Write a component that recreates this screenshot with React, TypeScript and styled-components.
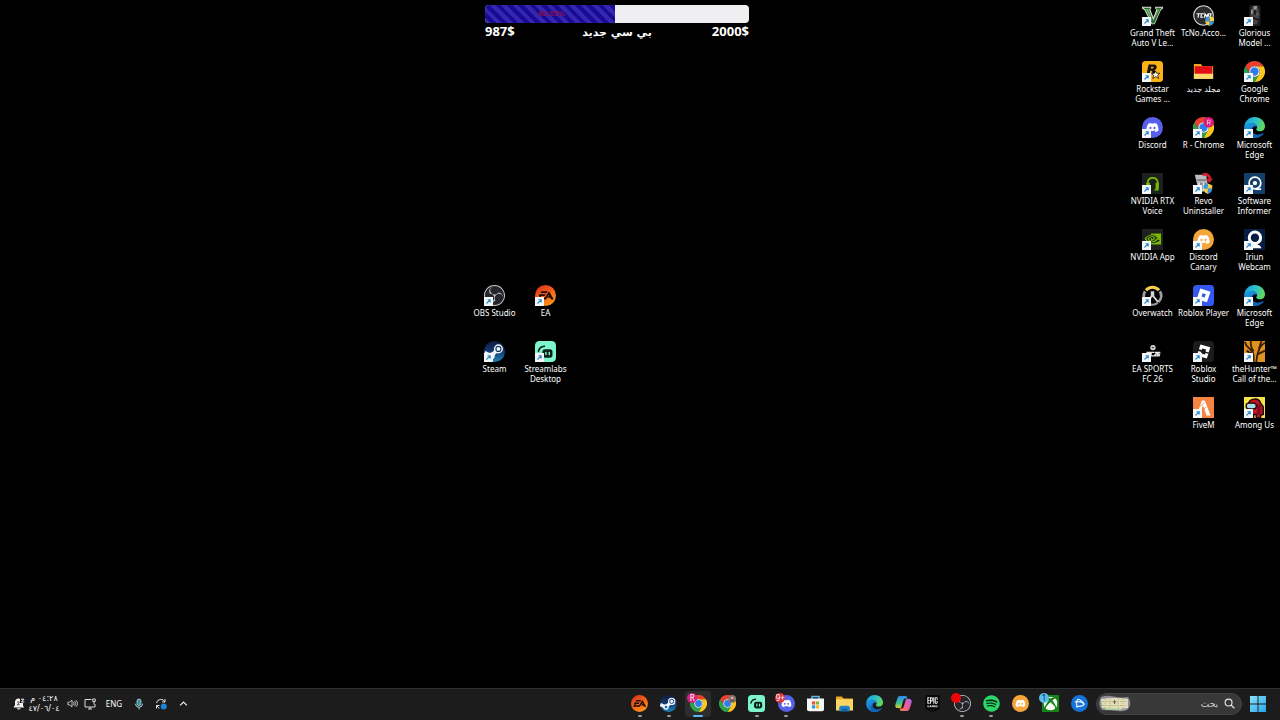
import React from 'react';
import styled, { createGlobalStyle } from 'styled-components';
import { FaDiscord, FaSpotify, FaXbox } from 'react-icons/fa';
import { SiNvidia, SiObsstudio, SiEpicgames } from 'react-icons/si';

const GlobalStyle = createGlobalStyle`
  * { box-sizing: border-box; }
  html { background: #000; }
  body { margin: 0; background: #000; color: #fff; font-family: "Noto Sans", "DejaVu Sans", sans-serif; }
  button, input { font: inherit; color: inherit; }
`;

/* ---------- Icon artwork, every drawing on a 24 unit square ---------- */

type ArtProps = { size: number };

const Art = ({ size, children }: ArtProps & { children: React.ReactNode }) => (
  <svg width={size} height={size} viewBox="0 0 24 24" aria-hidden="true">
    {children}
  </svg>
);

const chromeShape = (
  <>
    <path fill="#e8412f" d="M1.6 6A12 12 0 0 1 22.4 6H12A6 6 0 0 0 6.8 15Z" />
    <path fill="#fcc61c" d="M22.4 6A12 12 0 0 1 12 24L17.2 15A6 6 0 0 0 12 6Z" />
    <path fill="#2ba24c" d="M12 24A12 12 0 0 1 1.6 6L6.8 15A6 6 0 0 0 17.2 15Z" />
    <circle cx="12" cy="12" r="6" fill="#fff" />
    <circle cx="12" cy="12" r="4.8" fill="#2f7bea" />
  </>
);

const Chrome = ({ size }: ArtProps) => <Art size={size}>{chromeShape}</Art>;

const ChromeProfile = ({ size }: ArtProps) => (
  <Art size={size}>
    {chromeShape}
    <circle cx="18" cy="6" r="6" fill="#d81b78" />
    <path d="M16.5 9V3.5H18.6a1.4 1.4 0 0 1 0 2.9H16.5M18.3 6.4L19.8 9" fill="none" stroke="#fbd" strokeWidth="1" />
  </Art>
);

const ChromeGuest = ({ size }: ArtProps) => (
  <Art size={size}>
    {chromeShape}
    <circle cx="18.5" cy="5.5" r="5.5" fill="#8a7468" />
    <circle cx="18.5" cy="4.3" r="1.8" fill="#c9b6aa" />
    <path d="M15 9a3.6 3.6 0 0 1 7 0Z" fill="#5e5049" />
  </Art>
);

const Edge = ({ size }: ArtProps) => (
  <Art size={size}>
    <defs>
      <linearGradient id="edgeTop" x1="0" x2="1" y1="0.3" y2="0.6">
        <stop offset="0" stopColor="#1b9fe0" />
        <stop offset="0.5" stopColor="#2cc3c9" />
        <stop offset="1" stopColor="#68dc52" />
      </linearGradient>
      <linearGradient id="edgeLeft" x1="0" x2="0.6" y1="0" y2="1">
        <stop offset="0" stopColor="#1a9ee6" />
        <stop offset="1" stopColor="#1267c4" />
      </linearGradient>
    </defs>
    <path fill="url(#edgeLeft)" d="M.2 11.5C1 8 5 5.8 9 6.4C12.5 6.9 15 9 15 11.5C13.5 9.8 9 10.5 9 15C9 19 13 22 18.5 21.5A12 12 0 0 1 12 24C5 24 0 18.5 .2 11.5Z" />
    <path fill="url(#edgeTop)" d="M.2 11.5C.8 4.5 6 0 12 0C19 0 24 5 24 10.5C24 14 21.5 16.4 18.5 16.4S14 15.2 14 14.3S15 13 15 11.5C15 9 12.6 6.8 9 6.8C4.5 6.8 1 9 .2 11.5Z" />
    <path fill="#1560b4" d="M9.3 13C8.2 18 13 20.6 17 20C19.5 19.7 21.5 18.4 22.2 18.3C22.7 18.3 22.6 18.8 22.3 19.3C20 22.5 16.5 24 12.5 24C5.5 22.5 5.5 15.5 9.3 13Z" />
  </Art>
);

const DiscordBlue = ({ size }: ArtProps) => (
  <Art size={size}>
    <circle cx="12" cy="12" r="12" fill="#5660e8" />
    <FaDiscord x={4.5} y={4.5} size={15} color="#fff" />
  </Art>
);

const DiscordCanary = ({ size }: ArtProps) => (
  <Art size={size}>
    <circle cx="12" cy="12" r="12" fill="#f4a63a" />
    <FaDiscord x={4.5} y={4.5} size={15} color="#fff" />
  </Art>
);

const Steam = ({ size }: ArtProps) => (
  <Art size={size}>
    <defs>
      <linearGradient id="steamFill" x1="0" x2="0" y1="0" y2="1">
        <stop offset="0" stopColor="#101b3c" />
        <stop offset="0.5" stopColor="#123a70" />
        <stop offset="1" stopColor="#1a86bc" />
      </linearGradient>
    </defs>
    <circle cx="12" cy="12" r="12" fill="url(#steamFill)" />
    <path d="M.5 13.500L8 17L16 9.500" fill="none" stroke="#f2f6fa" strokeWidth="4.500" />
    <circle cx="8.5" cy="17" r="3.8" fill="#f2f6fa" />
    <circle cx="8.5" cy="17" r="1.8" fill="#1a5f97" />
    <circle cx="16.5" cy="9" r="5.2" fill="#f2f6fa" />
    <circle cx="16.5" cy="9" r="2.9" fill="none" stroke="#12386b" strokeWidth="1.3" />
  </Art>
);

const Ea = ({ size }: ArtProps) => (
  <Art size={size}>
    <defs>
      <linearGradient id="eaFill" x1="0.8" x2="0.2" y1="1" y2="0">
        <stop offset="0" stopColor="#ff9a1a" />
        <stop offset="0.5" stopColor="#f8641a" />
        <stop offset="1" stopColor="#d8341c" />
      </linearGradient>
    </defs>
    <circle cx="12" cy="12" r="12" fill="url(#eaFill)" />
    <path fill="#1c0d0a" d="M7.5 7H14.5L13.3 9H6.3ZM5.3 10.7H12.2L11 12.7H7L6 14.3H11.5L16 7L21.5 16.5H18.5L17.2 14.7H14.3L15.6 12.7H16.3L15.8 11L12.5 16.5H2.7L5.2 12.7H4Z" />
  </Art>
);

const Obs = ({ size }: ArtProps) => (
  <Art size={size}>
    <circle cx="12" cy="12" r="11.2" fill="#26252a" />
    <SiObsstudio x={0} y={0} size={24} color="#c9c9cc" />
  </Art>
);

const Streamlabs = ({ size }: ArtProps) => (
  <Art size={size}>
    <rect width="24" height="24" rx="5" fill="#7df5cb" />
    <path d="M4 11.500A7.500 7.500 0 0 1 10.500 6" fill="none" stroke="#0b1f1a" strokeWidth="2" strokeLinecap="round" />
    <rect x="8.5" y="9.5" width="11.5" height="9.5" rx="3" fill="#0b1f1a" />
    <path d="M12.500 13V15.500M16.300 13V15.500" stroke="#7df5cb" strokeWidth="1.7" strokeLinecap="round" />
  </Art>
);

const GrandTheft = ({ size }: ArtProps) => (
  <Art size={size}>
    <path fill="#d9e0d6" d="M0 2H10.5V4L9.5 5L13 14L16.5 5L15 4V2H24V4L21.5 6L14.5 22H11L3 6L0 4Z" />
    <path fill="#276c2c" d="M1 3H9.5V4L8 5L13 17.5L18 5L16 4V3H23L21 5L14 21H11.5L4 5Z" />
    <path fill="#76b56d" d="M4.5 4.5L12 20L10.5 14L7 4.5ZM18.5 5L13.5 17L20 5Z" />
  </Art>
);

const TcNo = ({ size }: ArtProps) => (
  <Art size={size}>
    <circle cx="12" cy="12" r="11.2" fill="#2b2b2c" stroke="#e3e3e3" strokeWidth="1.2" />
    <path d="M4 10H9M6.5 10L5.8 14.5M12.5 10H9.8L9 14H11.8M13 14.5L13.7 10L16 14L16.7 10M18 10H20.5L19.8 14H17.5Z" fill="none" stroke="#f4f4f4" strokeWidth="1.4" />
    <path fill="#3796dd" d="M14 14.5L19 12.5V18.5H14Z" />
    <path fill="#f5cf46" d="M19 12.5L24 14.5V18.5H19Z" />
    <path fill="#f5cf46" d="M14 18.5H19V24C16 23 14 21 14 18.5Z" />
    <path fill="#3796dd" d="M19 18.5H24C24 21 22 23 19 24Z" />
  </Art>
);

const Mouse = ({ size }: ArtProps) => (
  <Art size={size}>
    <rect x="6" y="0" width="13" height="24" rx="3" fill="#1c1c1c" />
    <path fill="#444447" d="M9 2H16L18 11L15 22H9L7 11Z" />
    <path fill="#98989b" d="M11 1H15L14 6H11ZM8 6L10 5V10H8Z" />
    <path stroke="#0b0b0b" strokeWidth="1.5" d="M12.5 5V11M9 14L16 17" />
    <path fill="#7b5a5d" d="M14 9H16V12H14Z" />
  </Art>
);

const Rockstar = ({ size }: ArtProps) => (
  <Art size={size}>
    <rect width="24" height="24" rx="4" fill="#fcb116" />
    <path fill="#17130a" fillRule="evenodd" d="M7.5 4H13.5C18 4 17.5 9.5 14.5 10.3C15.6 11.2 14.6 12.8 15 15.2H11.8C11.3 13 12.3 11 10.7 11H9.5L8.6 15.2H5.2ZM10.5 6.5L10 8.7H12C13.6 8.7 13.8 6.5 12.5 6.5Z" />
    <path fill="#fff" stroke="#17130a" strokeWidth=".9" d="M15.5 11.5L16.7 14H20.5L17.8 16.2L19 20L15.7 17.8L12.3 20L13.4 16.3L10.8 14H14.3Z" />
  </Art>
);

const RedFolder = ({ size }: ArtProps) => (
  <Art size={size}>
    <path fill="#e9a91f" d="M1 3.5H9L11 6H23V20H1Z" />
    <path fill="#e30d17" d="M2 6H22V15H2Z" />
    <path fill="#ffd970" d="M1 14.5H23V20.5H1Z" />
  </Art>
);

const RtxVoice = ({ size }: ArtProps) => (
  <Art size={size}>
    <rect width="24" height="24" fill="#1d211c" />
    <path d="M6.5 14V10.5A5.8 5.8 0 0 1 18 10.5V19H14.5" fill="none" stroke="#76b900" strokeWidth="2" />
    <path fill="#76b900" d="M5 11H9V18H5ZM15.5 11H19V18H15.5Z" />
  </Art>
);

const Revo = ({ size }: ArtProps) => (
  <Art size={size}>
    <path fill="#b9bcc1" d="M2 2H15L18 20L7 22Z" />
    <path fill="#7b7e85" d="M4 7H15V9H5ZM6 11H15V19H8Z" />
    <path fill="#e8e8ea" d="M6 11H8L9 20H7ZM11 11H13V20H11Z" />
    <path d="M11 2.5C14 0 19 2 19.5 7" fill="none" stroke="#d31e2c" strokeWidth="3" />
    <path fill="#d31e2c" d="M14.5 6.5H23L18.5 11.5Z" />
    <path fill="#3796dd" d="M12 14L17 12V18H12Z" />
    <path fill="#f5cf46" d="M17 12L22 14V18H17ZM12 18H17V24C14 23 12 21 12 18Z" />
    <path fill="#3796dd" d="M17 18H22C22 21 20 23 17 24Z" />
  </Art>
);

const Informer = ({ size }: ArtProps) => (
  <Art size={size}>
    <rect width="24" height="24" fill="#133f68" />
    <circle cx="12.5" cy="11.5" r="6.7" fill="none" stroke="#fff" strokeWidth="2" />
    <path stroke="#fff" strokeWidth="2" d="M13 18.5H19.5" />
    <circle cx="12.5" cy="11.5" r="2.5" fill="#fff" />
  </Art>
);

const NvidiaApp = ({ size }: ArtProps) => (
  <Art size={size}>
    <rect width="24" height="24" fill="#202020" />
    <SiNvidia x={3} y={2} size={19} color="#76b900" />
  </Art>
);

const Iriun = ({ size }: ArtProps) => (
  <Art size={size}>
    <rect width="24" height="24" fill="#071c42" />
    <path fill="#fff" d="M5 22C6 18 10 17 12.5 17S19 18 20 22Z" />
    <circle cx="12.5" cy="10" r="6.5" fill="#071c42" stroke="#fff" strokeWidth="3.4" />
  </Art>
);

const Overwatch = ({ size }: ArtProps) => (
  <Art size={size}>
    <path d="M4.5 6A9.8 9.8 0 0 1 19.5 6" fill="none" stroke="#f4cf4d" strokeWidth="3.4" />
    <path d="M20.5 7.2A9.8 9.8 0 0 1 18.8 19.4M3.5 7.2A9.8 9.8 0 0 0 5.2 19.4" fill="none" stroke="#9b9da2" strokeWidth="3.2" />
    <path d="M11 7V13L5.5 19.5M13 7V13L18.5 19.5" fill="none" stroke="#d4d5d8" strokeWidth="2" />
    <path d="M6 20.5A9.8 9.8 0 0 0 18 20.5" fill="none" stroke="#9b9da2" strokeWidth="2.5" />
  </Art>
);

const RobloxPlayer = ({ size }: ArtProps) => (
  <Art size={size}>
    <rect width="24" height="24" rx="4" fill="#3558f2" />
    <path fill="#fff" fillRule="evenodd" d="M8.3 4L20 7.6L15.9 19.8L4.2 16.2ZM11 9.4L9.7 13.2L13.4 14.4L14.6 10.5Z" />
  </Art>
);

const RobloxStudio = ({ size }: ArtProps) => (
  <Art size={size}>
    <rect width="24" height="24" rx="4" fill="#1b1b1d" />
    <path fill="#fff" d="M8.5 4L19.8 7.2L17.9 13L14.3 12L14.9 9.8L10.5 8.7L10 10.3L6.7 9.5ZM6.1 11.5L9.6 12.5L9 14.3L13.8 15.5L14.2 13.8L17.6 14.7L15.8 20L4.4 16.9Z" />
  </Art>
);

const Fc26 = ({ size }: ArtProps) => (
  <Art size={size}>
    <circle cx="12.5" cy="7.5" r="3" fill="#eee" />
    <path d="M12.5 5.5V9.5M10.5 7.5H14.5" stroke="#333" strokeWidth=".8" />
    <path d="M5 13H10M6.5 13L6 18M9 16H6.5M14 13H10.5L10 17H13M14.5 13H17L16 15L14 17H16.5M21 13H18.5L17.5 17H19.5L20 15H18" fill="none" stroke="#e6e6e6" strokeWidth="1.7" />
  </Art>
);

const Hunter = ({ size }: ArtProps) => (
  <Art size={size}>
    <rect width="24" height="24" fill="#df9220" />
    <path d="M1 1C2 8 10 9 11 16V24M8 0C7 5 8 8 11 12M24 2C18 5 17 10 15 17L14 24M20 0L17 9M24 11L16 15M3 11L9 15" fill="none" stroke="#38200c" strokeWidth="2.1" />
  </Art>
);

const FiveM = ({ size }: ArtProps) => (
  <Art size={size}>
    <rect width="24" height="24" fill="#f68442" />
    <path fill="#fff" d="M10.2 4H13.5L20 21H15.5L11.5 9L7.5 21H4L8.8 8Z" />
    <path stroke="#f68442" strokeWidth="1" d="M8 11L13 6M10.5 16L14.5 11.5" />
  </Art>
);

const AmongUs = ({ size }: ArtProps) => (
  <Art size={size}>
    <rect width="24" height="24" fill="#f6e34a" />
    <path fill="#c01524" stroke="#1c0509" strokeWidth="1.6" d="M5 24V9C5 1 17 0 19 7L22 11V20L19 21V24H14V20H11V24Z" />
    <path fill="#7a0d1e" d="M15 8L19 9V20H15Z" />
    <rect x="2.5" y="7" width="11.5" height="6.5" rx="3" fill="#a9dce8" stroke="#1c0509" strokeWidth="1.5" />
  </Art>
);

const Store = ({ size }: ArtProps) => (
  <Art size={size}>
    <path d="M7 6V2H17V6" fill="none" stroke="#5fbfee" strokeWidth="2" />
    <path fill="#f4f5f7" d="M0 5H24V20A3 3 0 0 1 21 23H3A3 3 0 0 1 0 20Z" />
    <path fill="#ef5132" d="M7 9H11.5V13.5H7Z" />
    <path fill="#7fba2c" d="M12.5 9H17V13.5H12.5Z" />
    <path fill="#1c9fe0" d="M7 14.5H11.5V19H7Z" />
    <path fill="#fcb813" d="M12.5 14.5H17V19H12.5Z" />
  </Art>
);

const Explorer = ({ size }: ArtProps) => (
  <Art size={size}>
    <path fill="#e8a71e" d="M0 2H8L11 5H24V12H0Z" />
    <path fill="#fcd462" d="M0 6H24V22H0Z" />
    <path fill="#2482c9" d="M4.5 23V18A3 3 0 0 1 7.5 15H16.5A3 3 0 0 1 19.5 18V23Z" />
    <path fill="#1664a8" d="M8 19H16V23H8Z" />
  </Art>
);

const Copilot = ({ size }: ArtProps) => (
  <Art size={size}>
    <defs>
      <linearGradient id="copilotLeft" x1="0" x2="0" y1="0" y2="1">
        <stop offset="0" stopColor="#2d8cf0" />
        <stop offset="0.6" stopColor="#3fc38c" />
        <stop offset="1" stopColor="#f0c52f" />
      </linearGradient>
      <linearGradient id="copilotRight" x1="1" x2="0" y1="0" y2="1">
        <stop offset="0" stopColor="#a667f0" />
        <stop offset="0.5" stopColor="#ee5c9a" />
        <stop offset="1" stopColor="#f78544" />
      </linearGradient>
    </defs>
    <path fill="url(#copilotLeft)" d="M7 1.5H15C17 1.5 17 3 17.5 5H14.5C12 5 11.6 8 11 10L9 17C8.5 19 6 18.5 4 18.5C0 18.5 0 15 1 12L3.5 4.5C4 2.5 5 1.5 7 1.5Z" />
    <path fill="url(#copilotRight)" d="M17 22.5H9C7 22.5 7 21 6.5 19H9.5C12 19 12.4 16 13 14L15 7C15.5 5 18 5.5 20 5.5C24 5.5 24 9 23 12L20.5 19.5C20 21.5 19 22.5 17 22.5Z" />
  </Art>
);

const Epic = ({ size }: ArtProps) => (
  <Art size={size}>
    <path fill="#f0f0f0" d="M4 2H20V18H4Z" />
    <SiEpicgames x={0} y={0} size={24} color="#08080a" />
  </Art>
);

const Spotify = ({ size }: ArtProps) => (
  <Art size={size}>
    <circle cx="12" cy="12" r="11" fill="#0c2a17" />
    <FaSpotify x={0} y={0} size={24} color="#2bd767" />
  </Art>
);

const Xbox = ({ size }: ArtProps) => (
  <Art size={size}>
    <rect width="24" height="24" rx="1" fill="#178217" />
    <FaXbox x={2} y={2} size={20} color="#f5f8f5" />
  </Art>
);

const BattleNet = ({ size }: ArtProps) => (
  <Art size={size}>
    <circle cx="12" cy="12" r="12" fill="#1672d6" />
    <g fill="none" stroke="#e8f5ff" strokeWidth="1.7">
      <path d="M9 18C7 13 8 6.5 10 6C13 6 17 10 18.500 13" />
      <path d="M5.500 10C10 8.500 17 10 18.500 13C17 16 11 16.500 7 15.500" />
    </g>
  </Art>
);

const Windows = ({ size }: ArtProps) => (
  <Art size={size}>
    <defs>
      <linearGradient id="winFill" x1="0" x2="1" y1="0" y2="1">
        <stop offset="0" stopColor="#8be2fb" />
        <stop offset="1" stopColor="#26a5ea" />
      </linearGradient>
    </defs>
    <path fill="url(#winFill)" d="M0 0H11.3V11.3H0ZM12.7 0H24V11.3H12.7ZM0 12.7H11.3V24H0ZM12.7 12.7H24V24H12.7Z" />
  </Art>
);

const BellSnooze = ({ size }: ArtProps) => (
  <Art size={size}>
    <path fill="#f2f2f2" d="M4 7C5 2 10 0 14 2V10H20V15L22 19H1L4 14ZM7.5 20.5H15.5C14 24 9 24 7.5 20.5Z" />
    <path d="M16 2.5H22L17 8H22.5" fill="none" stroke="#f2f2f2" strokeWidth="2" />
    <path d="M8.5 8H13L8.5 13.5H13.5" fill="none" stroke="#1c1c1c" strokeWidth="1.5" />
  </Art>
);

const Speaker = ({ size }: ArtProps) => (
  <Art size={size}>
    <g fill="none" stroke="#e4e4e4" strokeWidth="1.7">
      <path d="M2 9H6L11 4.5V19.5L6 15H2Z" />
      <path d="M14 9A4.5 4.5 0 0 1 14 15M16.5 6.5A8 8 0 0 1 16.5 17.5M19.5 4.5A11 11 0 0 1 19.5 19.5" />
    </g>
  </Art>
);

const Network = ({ size }: ArtProps) => (
  <Art size={size}>
    <g fill="none" stroke="#e4e4e4" strokeWidth="1.9">
      <path d="M15 3H2V18H22V12M8 22H16M12 18V22" />
      <path d="M17.5 2V7H22.5V2ZM20 7V13" />
    </g>
  </Art>
);

const Mic = ({ size }: ArtProps) => (
  <Art size={size}>
    <rect x="8" y="2" width="8" height="13" rx="4" fill="#3c8c98" stroke="#a9dfe6" strokeWidth="1.5" />
    <path d="M5 11.5A7 7 0 0 0 19 11.5M12 18.5V23" fill="none" stroke="#a9dfe6" strokeWidth="1.9" />
  </Art>
);

const Sync = ({ size }: ArtProps) => (
  <Art size={size}>
    <path d="M3 10A9 9 0 0 1 20 8M20 2V8H14M9 20.5A9 9 0 0 1 3.5 15M3 21V15H9" fill="none" stroke="#e4e4e4" strokeWidth="1.9" />
    <circle cx="17.5" cy="17" r="6" fill="#1f83d8" />
  </Art>
);

const Chevron = ({ size }: ArtProps) => (
  <Art size={size}>
    <path d="M3 17L12 8L21 17" fill="none" stroke="#f0f0f0" strokeWidth="3" />
  </Art>
);

const Magnifier = ({ size }: ArtProps) => (
  <Art size={size}>
    <circle cx="10" cy="10" r="7.5" fill="none" stroke="#e6e6e6" strokeWidth="2.5" />
    <path d="M15.5 15.5L22.5 22.5" stroke="#e6e6e6" strokeWidth="2.8" />
  </Art>
);

const ArrowMark = () => (
  <svg width="9" height="9" viewBox="0 0 9 9" aria-hidden="true">
    <rect width="9" height="9" fill="#f4f8fb" />
    <path d="M2.5 6.5L5.8 3.2M3.5 2.8H6.2V5.5" fill="none" stroke="#2a86c8" strokeWidth="1.1" />
  </svg>
);

const Doodle = () => (
  <svg width="33" height="17" viewBox="0 0 33 17" aria-hidden="true">
    <path fill="#8f8a99" d="M3 2Q9 0 16 1.5T30 2Q34 7 31 13Q28 17 20 16T4 15Q-1 10 3 2Z" />
    <path fill="#e2dfb8" d="M3 4Q16 2 30 4V13Q18 15 4 13Z" />
    <path stroke="#b3b98c" d="M4 6.5H29M4 10.5H29" strokeDasharray="2 1" />
    <path stroke="#c0ad86" d="M7 4V13M12 4V13M20 4V13M25 4V13" strokeDasharray="1 1" />
    <path stroke="#6c6350" d="M16.5 5V9M15 7H18" />
    <path stroke="#b7dca0" strokeWidth="1.5" d="M7 14H24" />
  </svg>
);

/* ---------- Page ---------- */

const Screen = styled.div`
  min-height: 100vh;
  display: flex;
  flex-direction: column;
`;

const Desktop = styled.main`
  flex: 1;
  display: grid;
  grid-template-columns: minmax(0, 469fr) minmax(0, 658fr) 153px;
  padding-top: 5px;
`;

const CenterArea = styled.div`
  grid-column: 2;
`;

const Goal = styled.section`
  width: 264px;
  height: 280px;
  margin-left: 16px;
`;

const GoalTrack = styled.div`
  height: 18px;
  border-radius: 4px;
  overflow: hidden;
  background: #efeff1;
  display: grid;
`;

const GoalFill = styled.div`
  grid-area: 1 / 1;
  background: repeating-linear-gradient(45deg, #3426ae 0 4px, #180c94 4px 8px);
`;

const GoalPercent = styled.span`
  grid-area: 1 / 1;
  width: 50%;
  text-align: center;
  font: 700 8px/18px "Liberation Sans", sans-serif;
  color: #8c0c50;
`;

const GoalLabels = styled.div`
  display: grid;
  grid-template-columns: 1fr auto 1fr;
  align-items: baseline;
  font: 700 13px/16px "Open Sans", "DejaVu Sans", sans-serif;
`;

const GoalTitle = styled.span`
  font-family: "DejaVu Sans", sans-serif;
  font-size: 11px;
`;

const GoalTarget = styled.span`
  text-align: right;
`;

const IconGrid = styled.div<{ $columns: number }>`
  display: grid;
  grid-template-columns: repeat(${(p) => p.$columns}, 51px);
  grid-auto-rows: 56px;
  align-content: start;
`;

const Shortcut = styled.button<{ $column?: number }>`
  ${(p) => (p.$column ? `grid-column: ${p.$column};` : '')}
  display: flex;
  flex-direction: column;
  align-items: center;
  gap: 2px;
  padding: 0;
  border: 0;
  background: none;
`;

const ShortcutIcon = styled.span`
  position: relative;
  height: 21px;
  svg { display: block; }
`;

const ShortcutMark = styled.span`
  position: absolute;
  left: 0;
  bottom: 0;
`;

const ShortcutName = styled.span`
  font-size: 8px;
  line-height: 10px;
  text-align: center;
  white-space: pre;
`;

const Taskbar = styled.footer`
  height: 32px;
  display: flex;
  align-items: center;
  background: #1c1c1c;
  border-top: 1px solid #303030;
  padding: 0 14px 2px 13px;
`;

const Tray = styled.div`
  display: flex;
  align-items: center;
  gap: 3px;
  margin-right: auto;
`;

const TrayButton = styled.button<{ $width: number }>`
  width: ${(p) => p.$width}px;
  height: 24px;
  padding: 0;
  border: 0;
  background: none;
  display: flex;
  align-items: center;
  justify-content: center;
  font-size: 8px;
`;

const Clock = styled.time`
  width: 32px;
  display: flex;
  flex-direction: column;
  align-items: center;
  font: 8px/10px "DejaVu Sans", sans-serif;
  white-space: nowrap;
`;

const AppRow = styled.nav`
  width: 469px;
  display: grid;
  grid-template-columns: repeat(16, 1fr);
  justify-items: center;
`;

const AppButton = styled.button<{ $active?: boolean }>`
  position: relative;
  width: 26px;
  height: 26px;
  padding: 0;
  border: 0;
  border-radius: 4px;
  background: ${(p) => (p.$active ? '#2d2d2d' : 'transparent')};
  display: flex;
  align-items: center;
  justify-content: center;
`;

const Indicator = styled.span<{ $active?: boolean }>`
  position: absolute;
  bottom: 0;
  left: 50%;
  transform: translateX(-50%);
  width: ${(p) => (p.$active ? 10 : 4)}px;
  height: 2px;
  border-radius: 1px;
  background: ${(p) => (p.$active ? '#5cb8ea' : '#9a9a9a')};
`;

const Badge = styled.span<{ $color: string; $ink: string }>`
  position: absolute;
  top: 2px;
  left: 2px;
  min-width: 10px;
  height: 10px;
  border-radius: 5px;
  background: ${(p) => p.$color};
  color: ${(p) => p.$ink};
  font-size: 8px;
  line-height: 10px;
`;

const Search = styled.label`
  width: 146px;
  height: 22px;
  margin: 0 8px 0 2px;
  padding: 0 6px 0 1px;
  display: flex;
  align-items: center;
  gap: 6px;
  border: 1px solid #444;
  border-radius: 11px;
  background: #383838;
`;

const SearchInput = styled.input`
  flex: 1;
  min-width: 0;
  padding: 0;
  border: 0;
  outline: 0;
  background: none;
  font: 9px/16px "DejaVu Sans", sans-serif;
  &::placeholder { color: #d2d2d2; opacity: 1; }
`;

const StartButton = styled.button`
  padding: 0;
  border: 0;
  background: none;
  display: flex;
`;

type Entry = { name: string; icon: React.FC<ArtProps>; plain?: boolean; column?: number };

const centerShortcuts: Entry[] = [
  { name: 'OBS Studio', icon: Obs },
  { name: 'EA', icon: Ea },
  { name: 'Steam', icon: Steam },
  { name: 'Streamlabs\nDesktop', icon: Streamlabs },
];

const sideShortcuts: Entry[] = [
  { name: 'Grand Theft\nAuto V Le...', icon: GrandTheft },
  { name: 'TcNo.Acco...', icon: TcNo, plain: true },
  { name: 'Glorious\nModel ...', icon: Mouse },
  { name: 'Rockstar\nGames ...', icon: Rockstar },
  { name: 'مجلد جديد', icon: RedFolder, plain: true },
  { name: 'Google\nChrome', icon: Chrome },
  { name: 'Discord', icon: DiscordBlue },
  { name: 'R - Chrome', icon: ChromeProfile },
  { name: 'Microsoft\nEdge', icon: Edge },
  { name: 'NVIDIA RTX\nVoice', icon: RtxVoice },
  { name: 'Revo\nUninstaller', icon: Revo },
  { name: 'Software\nInformer', icon: Informer },
  { name: 'NVIDIA App', icon: NvidiaApp },
  { name: 'Discord\nCanary', icon: DiscordCanary },
  { name: 'Iriun\nWebcam', icon: Iriun },
  { name: 'Overwatch', icon: Overwatch },
  { name: 'Roblox Player', icon: RobloxPlayer },
  { name: 'Microsoft\nEdge', icon: Edge },
  { name: 'EA SPORTS\nFC 26', icon: Fc26 },
  { name: 'Roblox\nStudio', icon: RobloxStudio },
  { name: 'theHunter™\nCall of the...', icon: Hunter },
  { name: 'FiveM', icon: FiveM, column: 2 },
  { name: 'Among Us', icon: AmongUs },
];

type App = {
  name: string;
  icon: React.FC<ArtProps>;
  running?: boolean;
  active?: boolean;
  badge?: { text: string; color: string; ink: string };
};

const apps: App[] = [
  { name: 'EA', icon: Ea, running: true },
  { name: 'Steam', icon: Steam, running: true },
  { name: 'Chrome', icon: Chrome, running: true, active: true, badge: { text: 'R', color: '#d6217c', ink: '#fff' } },
  { name: 'Chrome guest', icon: ChromeGuest },
  { name: 'Streamlabs', icon: Streamlabs, running: true },
  { name: 'Discord', icon: DiscordBlue, running: true, badge: { text: '9+', color: '#d8323e', ink: '#fff' } },
  { name: 'Store', icon: Store },
  { name: 'Explorer', icon: Explorer },
  { name: 'Edge', icon: Edge },
  { name: 'Copilot', icon: Copilot },
  { name: 'Epic Games', icon: Epic },
  { name: 'OBS Studio', icon: Obs, running: true, badge: { text: '', color: '#f00505', ink: '#fff' } },
  { name: 'Spotify', icon: Spotify, running: true },
  { name: 'Discord Canary', icon: DiscordCanary },
  { name: 'Xbox', icon: Xbox, badge: { text: '1', color: '#58bdf0', ink: '#10202c' } },
  { name: 'Battle.net', icon: BattleNet },
];

const Shortcuts = ({ entries, columns }: { entries: Entry[]; columns: number }) => (
  <IconGrid $columns={columns}>
    {entries.map(({ name, icon: Icon, plain, column }, index) => (
      <Shortcut key={index} type="button" $column={column}>
        <ShortcutIcon>
          <Icon size={21} />
          {!plain && (
            <ShortcutMark>
              <ArrowMark />
            </ShortcutMark>
          )}
        </ShortcutIcon>
        <ShortcutName>{name}</ShortcutName>
      </Shortcut>
    ))}
  </IconGrid>
);

export default function App() {
  const raised = 987;
  const target = 2000;
  const percent = (raised / target) * 100;

  return (
    <Screen>
      <GlobalStyle />
      <Desktop>
        <CenterArea>
          <Goal>
            <GoalTrack role="progressbar" aria-label="بي سي جديد" aria-valuenow={raised} aria-valuemax={target}>
              <GoalFill style={{ width: `${percent}%` }} />
              <GoalPercent>{percent.toFixed(2)}%</GoalPercent>
            </GoalTrack>
            <GoalLabels>
              <span>{raised}$</span>
              <GoalTitle dir="rtl">بي سي جديد</GoalTitle>
              <GoalTarget>{target}$</GoalTarget>
            </GoalLabels>
          </Goal>
          <Shortcuts entries={centerShortcuts} columns={2} />
        </CenterArea>
        <Shortcuts entries={sideShortcuts} columns={3} />
      </Desktop>
      <Taskbar>
        <Tray>
          <TrayButton type="button" $width={12} aria-label="Notifications"><BellSnooze size={12} /></TrayButton>
          <Clock>
            <span dir="rtl">٠٤:٢٨ م</span>
            <bdo dir="ltr">٤٧/٠٦/٠٤</bdo>
          </Clock>
          <TrayButton type="button" $width={18} aria-label="Volume"><Speaker size={11} /></TrayButton>
          <TrayButton type="button" $width={12} aria-label="Network"><Network size={12} /></TrayButton>
          <TrayButton type="button" $width={30} aria-label="Language">ENG</TrayButton>
          <TrayButton type="button" $width={14} aria-label="Microphone"><Mic size={12} /></TrayButton>
          <TrayButton type="button" $width={24} aria-label="Updates"><Sync size={12} /></TrayButton>
          <TrayButton type="button" $width={14} aria-label="Hidden icons"><Chevron size={9} /></TrayButton>
        </Tray>
        <AppRow>
          {apps.map(({ name, icon: Icon, running, active, badge }) => (
            <AppButton key={name} type="button" aria-label={name} $active={active}>
              <Icon size={17} />
              {badge && <Badge $color={badge.color} $ink={badge.ink}>{badge.text}</Badge>}
              {running && <Indicator $active={active} />}
            </AppButton>
          ))}
        </AppRow>
        <Search>
          <Doodle />
          <SearchInput type="search" dir="rtl" placeholder="بحث" aria-label="بحث" />
          <Magnifier size={11} />
        </Search>
        <StartButton type="button" aria-label="Start"><Windows size={16} /></StartButton>
      </Taskbar>
    </Screen>
  );
}
